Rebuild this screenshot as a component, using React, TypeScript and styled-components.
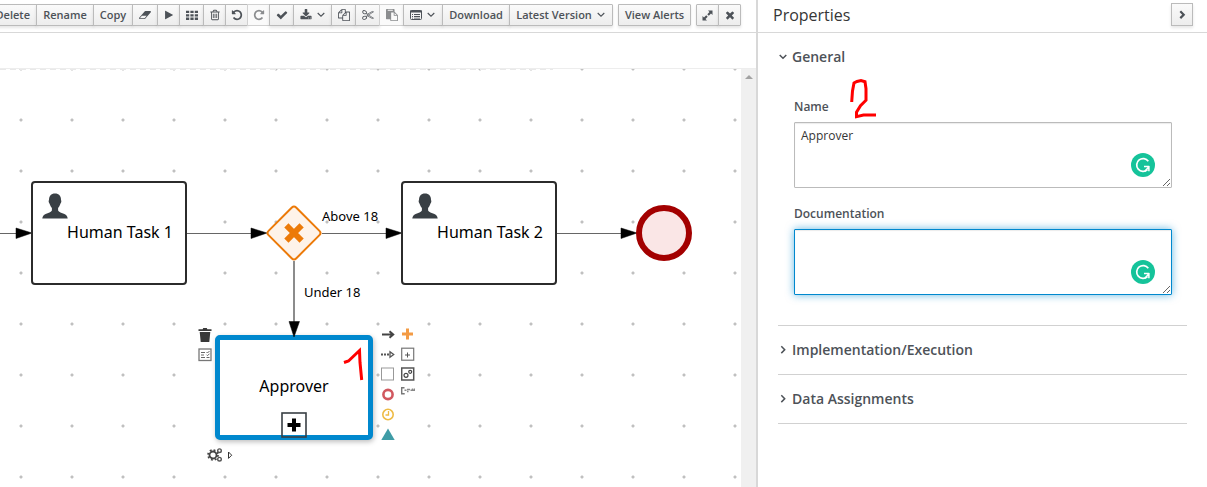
import React from "react";
import styled, { createGlobalStyle, css } from "styled-components";

const GlobalStyle = createGlobalStyle`
  *, *::before, *::after { box-sizing: border-box; }
  body {
    margin: 0;
    background: #fff;
    color: #363636;
    font: 12px/20px "Open Sans", "Noto Sans", sans-serif;
  }
  button, textarea { font: inherit; color: inherit; }
`;

/* ---------- layout ---------- */

const Shell = styled.div`
  display: grid;
  grid-template-columns: minmax(0, 1fr) 451px;
  min-height: 100vh;
`;

const Editor = styled.main`
  display: flex;
  flex-direction: column;
  min-width: 0;
`;

const Toolbar = styled.div`
  display: flex;
  justify-content: flex-end;
  align-items: flex-start;
  gap: 5px;
  height: 33px;
  padding: 4px 15px 0 0;
  border-bottom: 1px solid #d8d8d8;
  overflow: hidden;
`;

const ButtonGroup = styled.div`
  display: flex;
  flex: none;
`;

const raised = css`
  border: 1px solid #bbb;
  background: linear-gradient(#fafafa, #ededed);
  box-shadow: 0 2px 3px rgba(3, 3, 3, 0.1);
  color: #4d5258;
`;

const ToolButton = styled.button<{ $width?: number }>`
  ${raised}
  display: flex;
  align-items: center;
  justify-content: center;
  gap: 4px;
  flex: none;
  width: ${(p) => (p.$width ? `${p.$width}px` : "auto")};
  height: 22px;
  padding: 0 6px;
  font-size: 11px;
  font-weight: 600;
  line-height: 20px;
  white-space: nowrap;
  & + & { margin-left: -1px; }
  &:first-child { border-radius: 1px 0 0 1px; }
  &:last-child { border-radius: 0 1px 1px 0; }
  &:disabled {
    background: #fafafa;
    border-color: #d1d1d1;
    color: #8b8d8f;
    box-shadow: none;
  }
  svg { flex: none; }
`;

const TabStrip = styled.div`
  height: 36px;
  border-bottom: 1px solid #ededed;
`;

const CanvasArea = styled.div`
  display: flex;
  flex: 1;
  min-height: 418px;
`;

const Canvas = styled.div`
  position: relative;
  flex: 1;
  overflow: hidden;
  background-image:
    repeating-linear-gradient(90deg, #e9e9e9 0 6px, transparent 6px 10px),
    radial-gradient(circle at 2px 2px, #c0c0c0 1px, transparent 2px);
  background-size: 553px 1px, 51px 51px;
  background-position: 0 0, 19px -2px;
  background-repeat: no-repeat, repeat;
  color: #000;
  font-family: "Noto Sans", "Open Sans", sans-serif;
`;

const ScrollTrack = styled.div`
  width: 15px;
  padding-top: 6px;
  background: #f0f0f0;
  text-align: center;
  line-height: 0;
`;

/* ---------- diagram ---------- */

interface Place {
  $x: number;
  $y: number;
}

const placed = css<Place>`
  position: absolute;
  left: ${(p) => p.$x}px;
  top: ${(p) => p.$y}px;
`;

const Connectors = styled.svg`
  position: absolute;
  left: 0;
  top: 0;
`;

const TaskNode = styled.div<Place>`
  ${placed}
  display: flex;
  align-items: center;
  justify-content: center;
  width: 156px;
  height: 104px;
  padding: 0 0 2px 22px;
  border: 2px solid #2b2b2b;
  border-radius: 4px;
  background: #fff;
  font-size: 16px;
`;

const TaskIcon = styled.svg`
  position: absolute;
  left: 9px;
  top: 10px;
`;

const SubprocessNode = styled.div<Place>`
  ${placed}
  display: flex;
  align-items: center;
  justify-content: center;
  width: 158px;
  height: 105px;
  padding-bottom: 4px;
  border: 5px solid #0088ce;
  border-radius: 5px;
  background: #fff;
  box-shadow: 1px 2px 5px rgba(0, 0, 0, 0.25);
  font-size: 16px;
`;

const EdgeLabel = styled.span<Place>`
  ${placed}
  font-size: 13px;
  white-space: nowrap;
`;

const Palette = styled.div<Place & { $rows: number }>`
  ${placed}
  display: grid;
  grid-auto-flow: column;
  grid-template-rows: repeat(${(p) => p.$rows}, 14px);
  grid-auto-columns: 14px;
  gap: 6px;
`;

const PaletteButton = styled.button`
  display: block;
  width: 14px;
  height: 14px;
  padding: 0;
  border: 0;
  background: #fff;
  svg { display: block; }
`;

const Markup = styled.svg<Place>`
  ${placed}
  pointer-events: none;
`;

/* ---------- properties ---------- */

const Panel = styled.aside`
  position: relative;
  border-left: 2px solid #d8d8d8;
`;

const PanelHeader = styled.header`
  display: flex;
  align-items: flex-start;
  justify-content: space-between;
  height: 33px;
  padding: 3px 14px 0 15px;
  border-bottom: 1px solid #d8d8d8;
`;

const PanelTitle = styled.h1`
  margin: 0;
  font-size: 16px;
  font-weight: 400;
  line-height: 24px;
`;

const CollapseButton = styled.button`
  ${raised}
  display: flex;
  align-items: center;
  justify-content: center;
  width: 22px;
  height: 23px;
  padding: 0;
`;

const Sections = styled.div`
  padding: 0 20px;
`;

const Section = styled.section`
  border-bottom: 1px solid #d1d1d1;
`;

const SectionToggle = styled.button`
  display: flex;
  align-items: center;
  gap: 4px;
  width: 100%;
  height: 48px;
  padding: 0;
  border: 0;
  background: none;
  color: #4d5258;
  font-size: 14px;
  font-weight: 600;
  text-align: left;
`;

const Fields = styled.div`
  display: flex;
  flex-direction: column;
  gap: 16px;
  padding: 16px 15px 30px 16px;
`;

const Field = styled.div`
  position: relative;
  display: flex;
  flex-direction: column;
  gap: 5px;
`;

const FieldLabel = styled.label`
  align-self: flex-start;
  color: #4d5258;
  font-weight: 600;
`;

const TextArea = styled.textarea<{ $active?: boolean }>`
  display: block;
  width: 100%;
  height: 66px;
  padding: 3px 6px;
  border: 1px solid ${(p) => (p.$active ? "#0088ce" : "#bbb")};
  border-radius: 1px;
  outline: none;
  background: #fff;
  box-shadow: ${(p) =>
    p.$active
      ? "inset 0 1px 1px rgba(3, 3, 3, 0.08), 0 0 8px rgba(0, 136, 206, 0.6)"
      : "inset 0 1px 1px rgba(3, 3, 3, 0.08)"};
`;

const Checker = styled.svg`
  position: absolute;
  right: 17px;
  bottom: 11px;
`;

/* ---------- icons ---------- */

const glyphs = {
  eraser:
    "M896 1408l336-384h-768l-336 384h768zm1013-1077q15 34 9.500 71.500t-30.500 65.500l-896 1024q-38 44-96 44h-768q-38 0-69.500-20.500t-47.500-54.500q-15-34-9.500-71.500t30.500-65.500l896-1024q38-44 96-44h768q38 0 69.500 20.500t47.500 54.500z",
  play: "M1576 927l-1328 738q-23 13-39.500 3t-16.500-36v-1472q0-26 16.500-36t39.500 3l1328 738q23 13 23 31t-23 31z",
  grid: "M0 256h480v352h-480zM656 256h480v352h-480zM1312 256h480v352h-480zM0 768h480v352h-480zM656 768h480v352h-480zM1312 768h480v352h-480zM0 1280h480v352h-480zM656 1280h480v352h-480zM1312 1280h480v352h-480z",
  trash:
    "M704 736v576q0 14-9 23t-23 9h-64q-14 0-23-9t-9-23v-576q0-14 9-23t23-9h64q14 0 23 9t9 23zm256 0v576q0 14-9 23t-23 9h-64q-14 0-23-9t-9-23v-576q0-14 9-23t23-9h64q14 0 23 9t9 23zm256 0v576q0 14-9 23t-23 9h-64q-14 0-23-9t-9-23v-576q0-14 9-23t23-9h64q14 0 23 9t9 23zm128 724v-948h-896v948q0 22 7 40.500t14.500 27 10.500 8.500h832q3 0 10.500-8.500t14.500-27 7-40.500zm-672-1076h448l-48-117q-7-9-17-11h-317q-10 2-17 11zm928 32v64q0 14-9 23t-23 9h-96v948q0 83-47 143.500t-113 60.500h-832q-66 0-113-58.500t-47-141.500v-952h-96q-14 0-23-9t-9-23v-64q0-14 9-23t23-9h309l70-167q15-37 54-63t79-26h320q40 0 79 26t54 63l70 167h309q14 0 23 9t9 23z",
  undo: "M1664 896q0 156-61 298t-164 245-245 164-298 61q-172 0-327-72.500t-264-204.500q-7-10-6.500-22.500t8.500-20.500l137-138q10-9 25-9 16 2 23 12 73 95 179 147t225 52q104 0 198.500-40.500t163.500-109.500 109.500-163.500 40.500-198.500-40.500-198.500-109.500-163.500-163.500-109.500-198.500-40.500q-98 0-188 35.500t-160 101.500l137 138q31 30 14 69-17 40-59 40h-448q-26 0-45-19t-19-45v-448q0-42 40-59 39-17 69 14l130 129q107-101 244.500-156.500t284.500-55.500q156 0 298 61t245 164 164 245 61 298z",
  check:
    "M1671 566q0 40-28 68l-724 724-136 136q-28 28-68 28t-68-28l-136-136-362-362q-28-28-28-68t28-68l136-136q28-28 68-28t68 28l294 295 656-657q28-28 68-28t68 28l136 136q28 28 28 68z",
  download:
    "M1344 1344q0-26-19-45t-45-19-45 19-19 45 19 45 45 19 45-19 19-45zm256 0q0-26-19-45t-45-19-45 19-19 45 19 45 45 19 45-19 19-45zm128-224v320q0 40-28 68t-68 28h-1472q-40 0-68-28t-28-68v-320q0-40 28-68t68-28h465l135 136q58 56 136 56t136-56l136-136h464q40 0 68 28t28 68zm-325-569q17 41-14 70l-448 448q-18 19-45 19t-45-19l-448-448q-31-29-14-70 17-39 59-39h256v-448q0-26 19-45t45-19h256q26 0 45 19t19 45v448h256q42 0 59 39z",
  copy: "M1696 384q40 0 68 28t28 68v1216q0 40-28 68t-68 28h-960q-40 0-68-28t-28-68v-288h-544q-40 0-68-28t-28-68v-672q0-40 20-88t48-76l408-408q28-28 76-48t88-20h416q40 0 68 28t28 68v328q68-40 128-40h416zm-544 213l-299 299h299v-299zm-640-384l-299 299h299v-299zm196 647l316-316v-416h-384v416q0 40-28 68t-68 28h-416v640h512v-256q0-40 20-88t48-76zm956 804v-1152h-384v416q0 40-28 68t-68 28h-416v640h896z",
  paste:
    "M768 1664h896v-640h-416q-40 0-68-28t-28-68v-416h-384v1152zm256-1440v-64q0-13-9.500-22.500t-22.500-9.500h-704q-13 0-22.500 9.500t-9.500 22.500v64q0 13 9.500 22.500t22.500 9.500h704q13 0 22.500-9.500t9.500-22.500zm256 672h299l-299-299v299zm512 128v672q0 40-28 68t-68 28h-960q-40 0-68-28t-28-68v-160h-544q-40 0-68-28t-28-68v-1344q0-40 28-68t68-28h1088q40 0 68 28t28 68v328q21 13 36 28l408 408q28 28 48 76t20 88z",
  close:
    "M1490 1322q0 40-28 68l-136 136q-28 28-68 28t-68-28l-294-294-294 294q-28 28-68 28t-68-28l-136-136q-28-28-28-68t28-68l294-294-294-294q-28-28-28-68t28-68l136-136q28-28 68-28t68 28l294 294 294-294q28-28 68-28t68 28l136 136q28 28 28 68t-28 68l-294 294 294 294q28 28 28 68z",
};

const Glyph = ({ name, width = 12, flip }: { name: keyof typeof glyphs; width?: number; flip?: boolean }) => (
  <svg
    width={width}
    height="12"
    viewBox={name === "eraser" ? "0 0 1920 1792" : "0 0 1792 1792"}
    fill="currentColor"
    aria-hidden="true"
  >
    <path d={glyphs[name]} transform={flip ? "translate(1792 0) scale(-1 1)" : undefined} />
  </svg>
);

const Scissors = () => (
  <svg width="12" height="12" viewBox="0 0 12 12" fill="none" stroke="currentColor" strokeWidth="0.900" aria-hidden="true">
    <ellipse cx="2.600" cy="3.200" rx="2" ry="1.500" transform="rotate(25 2.600 3.200)" />
    <ellipse cx="2.600" cy="8.800" rx="2" ry="1.500" transform="rotate(-25 2.600 8.800)" />
    <path d="M4.200 4.400l2.300 1.600 5-3.200-1.300-.3-5.400 3M4.200 7.600L6.500 6l5 3.200-1.300.3-5.400-3" strokeWidth="0.700" />
  </svg>
);

const ListIcon = () => (
  <svg width="12" height="12" viewBox="0 0 12 12" aria-hidden="true">
    <rect x="0.500" y="1.500" width="11" height="9" rx="1" fill="none" stroke="currentColor" />
    <path d="M0 1.500h12v2H0zM2 5h1v1H2zM4 5h6v1H4zM2 7h1v1H2zM4 7h6v1H4zM2 8.800h1v.7H2zM4 8.800h6v.7H4z" fill="currentColor" />
  </svg>
);

const ExpandIcon = () => (
  <svg width="11" height="11" viewBox="0 0 11 11" fill="currentColor" aria-hidden="true">
    <path d="M6 .5h4.500V5L9 3.500 6.800 5.700 5.300 4.200 7.500 2zM5 10.500H.5V6L2 7.500l2.200-2.200 1.500 1.500L3.500 9z" />
  </svg>
);

const AngleIcon = ({ right, weight = 1.1 }: { right?: boolean; weight?: number }) => (
  <svg width="10" height="10" viewBox="0 0 10 10" fill="none" stroke="currentColor" strokeWidth={weight} aria-hidden="true">
    <path d={right ? "M3.300 1.300l3.400 3.400-3.400 3.400" : "M1.700 3l3.300 3.200L8.300 3"} />
  </svg>
);

const PersonIcon = () => (
  <TaskIcon width="26" height="26" viewBox="0 0 26 26" fill="#393f44" aria-hidden="true">
    <path d="M13 .5c4 0 6 2.600 6 6.300 0 .7.500.8.300 2-.2 1.100-.8 1.600-1.200 2.700-.5 1.600-1.200 2.700-2 3.500v2.500c.5 1.700 3.700 2.400 6.300 3.600 2 .9 3 2.200 3.300 4.500H.3c.3-2.300 1.300-3.600 3.300-4.500 2.600-1.200 5.800-1.900 6.300-3.600V15c-.8-.8-1.500-1.900-2-3.500-.4-1.100-1-1.600-1.200-2.700-.2-1.200.3-1.300.3-2C7 3.100 9 .5 13 .5z" />
  </TaskIcon>
);

const Icon14 = ({ children }: { children: React.ReactNode }) => (
  <svg width="14" height="14" viewBox="0 0 14 14" fill="none" aria-hidden="true">
    {children}
  </svg>
);

const palette: { label: string; icon: React.ReactNode }[] = [
  {
    label: "Create sequence flow",
    icon: <path d="M1 7.500h11M8.500 4.300l3.700 3.200-3.700 3.200" stroke="#444" strokeWidth="2" />,
  },
  {
    label: "Create association",
    icon: (
      <>
        <path d="M0 7.500h9" stroke="#555" strokeWidth="2" strokeDasharray="2 1" />
        <path d="M9 4.800L12.700 7.500 9 10.200z" stroke="#555" strokeWidth="1.300" />
      </>
    ),
  },
  { label: "Create task", icon: <rect x="0.500" y="1" width="12" height="12" stroke="#999" /> },
  { label: "Create end event", icon: <circle cx="7" cy="7.500" r="4.600" stroke="#d1585f" strokeWidth="2.600" /> },
  {
    label: "Create intermediate event",
    icon: (
      <>
        <circle cx="7" cy="7.500" r="5.200" stroke="#eebb45" strokeWidth="1.600" />
        <path d="M7.500 4V8H4.500" stroke="#eebb45" strokeWidth="1.300" />
      </>
    ),
  },
  { label: "Convert", icon: <path d="M7 1.500L13.700 13H.3z" fill="#3f9ca6" /> },
  { label: "Create gateway", icon: <path d="M6.500 1.500v11M1 7h11" stroke="#f39b45" strokeWidth="3" /> },
  {
    label: "Create sub-process",
    icon: (
      <>
        <rect x="0.700" y="1.200" width="12" height="12" stroke="#777" strokeWidth="1.200" />
        <path d="M6.500 5.500v5M4 8h5" stroke="#555" />
      </>
    ),
  },
  {
    label: "Create service task",
    icon: (
      <>
        <rect x="0.700" y="1" width="12" height="12" stroke="#555" strokeWidth="1.500" />
        <circle cx="5" cy="8.300" r="2" stroke="#444" strokeWidth="1.200" />
        <circle cx="9.200" cy="4.800" r="1.500" stroke="#444" strokeWidth="1.200" />
      </>
    ),
  },
  {
    label: "Create text annotation",
    icon: (
      <>
        <path d="M3.500.8H.7v6h3" stroke="#777" strokeWidth="1.400" />
        <path d="M3.500 3.200h2M6 2.500h3M9.500 3.200h4.500M6 4.500h1.500M11.500 1.500v2.500M13.500 1.500v2.500" stroke="#888" strokeWidth="1.400" />
      </>
    ),
  },
];

const GrammarBadge = () => (
  <Checker width="24" height="24" viewBox="0 0 24 24" fill="none" aria-hidden="true">
    <circle cx="12" cy="12" r="12" fill="#15c39a" />
    <path d="M17.300 8.200A6.400 6.400 0 1 0 16.500 16.600" stroke="#fff" strokeWidth="1.700" />
    <path d="M13 13.500h5.200M17.900 13v5.300M13.800 18.200l3.700-4" stroke="#fff" strokeWidth="1.500" />
  </Checker>
);

/* ---------- page ---------- */

const HorizontalArrow = ({ from, to }: { from: number; to: number }) => (
  <>
    <path d={`M${from} 164.500H${to - 12}`} stroke="#666" />
    <path d={`M${to} 164l-16-5v10.500z`} fill="#000" stroke="#000" strokeWidth="0.500" />
  </>
);

const Diagram = () => (
  <Canvas>
    <Connectors width="741" height="418" viewBox="0 0 741 418" fill="none" aria-hidden="true">
      <HorizontalArrow from={0} to={32} />
      <HorizontalArrow from={187} to={267} />
      <HorizontalArrow from={322} to={402} />
      <HorizontalArrow from={557} to={637} />
      <rect
        x="274.500"
        y="144.500"
        width="39"
        height="39"
        rx="3"
        transform="rotate(45 294 164)"
        fill="#fef3e9"
        stroke="#ec7a08"
        strokeWidth="2"
      />
      <path d="M288.500 158.500l11 11M299.500 158.500l-11 11" stroke="#ec7a08" strokeWidth="6" strokeLinecap="square" />
      <circle cx="664" cy="164" r="25" fill="#fae6e6" stroke="#a30000" strokeWidth="6" />
    </Connectors>

    <TaskNode $x={31} $y={112}>
      <PersonIcon />
      Human Task 1
    </TaskNode>
    <TaskNode $x={401} $y={112}>
      <PersonIcon />
      Human Task 2
    </TaskNode>
    <SubprocessNode $x={215} $y={266}>
      Approver
    </SubprocessNode>
    <EdgeLabel $x={322} $y={137}>Above 18</EdgeLabel>
    <EdgeLabel $x={304} $y={213}>Under 18</EdgeLabel>

    <Connectors width="741" height="418" viewBox="0 0 741 418" fill="none" aria-hidden="true">
      <path d="M294 192v66" stroke="#666" strokeWidth="1.500" />
      <path d="M294 268l-5-15.500h10.500z" fill="#000" stroke="#000" strokeWidth="0.500" />
      <rect x="282" y="344" width="24" height="24" stroke="#393f44" strokeWidth="1.600" />
      <path d="M294 349.500v13M287.500 356h13" stroke="#000" strokeWidth="4" />
    </Connectors>

    <Palette $x={381} $y={258} $rows={6}>
      {palette.map((item) => (
        <PaletteButton key={item.label} aria-label={item.label}>
          <Icon14>{item.icon}</Icon14>
        </PaletteButton>
      ))}
    </Palette>
    <Palette $x={198} $y={259} $rows={2}>
      <PaletteButton aria-label="Remove">
        <Icon14>
          <path d="M.5 1.200h4.200L5.200 0h3.600l.5 1.200h4.200v1.900H.5zM1.700 4h10.600l-1 10H2.700z" fill="#393939" />
        </Icon14>
      </PaletteButton>
      <PaletteButton aria-label="Generate form">
        <Icon14>
          <rect x="1" y="1" width="12" height="11.500" stroke="#777" strokeWidth="1.300" />
          <path d="M3 4.500h4M3 7h3M3 9.500h4M8.500 9.500h3" stroke="#666" />
          <path d="M8.500 4l1 1 2-2M8.500 6.700l1 1 2-2" stroke="#666" />
        </Icon14>
      </PaletteButton>
    </Palette>
    <Markup $x={207} $y={378} width="27" height="16" viewBox="0 0 27 16" fill="none">
      <circle cx="6" cy="8" r="3.500" stroke="#444" strokeWidth="1.800" />
      <circle cx="6" cy="8" r="5" stroke="#444" strokeWidth="1.700" strokeDasharray="1.900 2.030" />
      <circle cx="12.500" cy="3.700" r="1.800" stroke="#555" strokeWidth="1.400" />
      <circle cx="12.500" cy="12.200" r="1.800" stroke="#555" strokeWidth="1.400" />
      <path d="M21.500 5l3.200 3.200-3.200 3.200z" stroke="#333" />
    </Markup>
    <Markup $x={342} $y={278} width="24" height="36" viewBox="0 0 24 36" fill="none">
      <path d="M2 15.500l4.500-1.500L17.500 3.500l.5 12 1.700 17.500" stroke="#f00" strokeWidth="3" />
    </Markup>
  </Canvas>
);

export default function App() {
  return (
    <>
      <GlobalStyle />
      <Shell>
        <Editor>
          <Toolbar role="toolbar" aria-label="Process editor">
            <ButtonGroup>
              <ToolButton>Delete</ToolButton>
              <ToolButton $width={58}>Rename</ToolButton>
              <ToolButton $width={40}>Copy</ToolButton>
              <ToolButton $width={26} aria-label="Clear"><Glyph name="eraser" /></ToolButton>
              <ToolButton $width={23} aria-label="Run"><Glyph name="play" width={10} /></ToolButton>
              <ToolButton $width={25} aria-label="Grid"><Glyph name="grid" /></ToolButton>
              <ToolButton $width={23} aria-label="Delete selection"><Glyph name="trash" /></ToolButton>
              <ToolButton $width={23} aria-label="Undo"><Glyph name="undo" /></ToolButton>
              <ToolButton $width={23} aria-label="Redo" disabled><Glyph name="undo" flip /></ToolButton>
              <ToolButton $width={25} aria-label="Validate"><Glyph name="check" /></ToolButton>
              <ToolButton $width={39} aria-label="Export"><Glyph name="download" /><AngleIcon /></ToolButton>
              <ToolButton $width={25} aria-label="Copy selection"><Glyph name="copy" /></ToolButton>
              <ToolButton $width={25} aria-label="Cut selection"><Scissors /></ToolButton>
              <ToolButton $width={25} aria-label="Paste" disabled><Glyph name="paste" /></ToolButton>
              <ToolButton $width={40} aria-label="Forms"><ListIcon /><AngleIcon /></ToolButton>
              <ToolButton $width={68}>Download</ToolButton>
              <ToolButton $width={104}>Latest Version <AngleIcon /></ToolButton>
            </ButtonGroup>
            <ButtonGroup>
              <ToolButton $width={73}>View Alerts</ToolButton>
            </ButtonGroup>
            <ButtonGroup>
              <ToolButton $width={23} aria-label="Maximize"><ExpandIcon /></ToolButton>
              <ToolButton $width={23} aria-label="Close"><Glyph name="close" /></ToolButton>
            </ButtonGroup>
          </Toolbar>
          <TabStrip />
          <CanvasArea>
            <Diagram />
            <ScrollTrack>
              <svg width="8" height="4" viewBox="0 0 8 4" aria-hidden="true">
                <path d="M4 0l4 4H0z" fill="#a3a3a3" />
              </svg>
            </ScrollTrack>
          </CanvasArea>
        </Editor>

        <Panel>
          <PanelHeader>
            <PanelTitle>Properties</PanelTitle>
            <CollapseButton aria-label="Collapse panel"><AngleIcon right weight={2.2} /></CollapseButton>
          </PanelHeader>
          <Sections>
            <Section>
              <SectionToggle aria-expanded="true"><AngleIcon weight={1.5} />General</SectionToggle>
              <Fields>
                <Field>
                  <FieldLabel htmlFor="name">Name</FieldLabel>
                  <TextArea id="name" defaultValue="Approver" />
                  <GrammarBadge />
                </Field>
                <Field>
                  <FieldLabel htmlFor="documentation">Documentation</FieldLabel>
                  <TextArea id="documentation" $active />
                  <GrammarBadge />
                </Field>
              </Fields>
            </Section>
            <Section>
              <SectionToggle aria-expanded="false"><AngleIcon right weight={1.5} />Implementation/Execution</SectionToggle>
            </Section>
            <Section>
              <SectionToggle aria-expanded="false"><AngleIcon right weight={1.5} />Data Assignments</SectionToggle>
            </Section>
          </Sections>
          <Markup $x={91} $y={77} width="30" height="44" viewBox="0 0 30 44" fill="none">
            <path d="M2.700 25l.8-11L5 6l3-1.500L12 3.500l4 1.200 1 7v11.500l-5.500 5.500-4 6.500v4.500l7-1.700h12.500" stroke="#f00" strokeWidth="3" />
          </Markup>
        </Panel>
      </Shell>
    </>
  );
}
